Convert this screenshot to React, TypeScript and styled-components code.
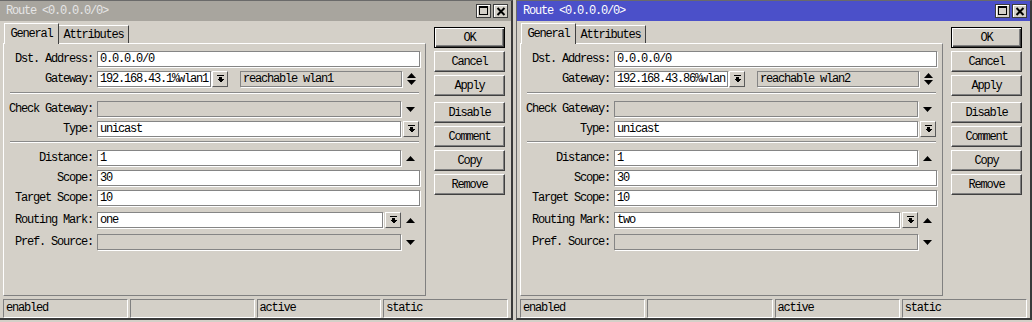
import React from 'react';
import styled, { createGlobalStyle } from 'styled-components';

const GlobalStyle = createGlobalStyle`
  html, body {
    margin: 0;
    padding: 0;
    background: #d4d0c8;
    overflow: hidden;
  }
  body {
    font-family: 'Liberation Mono', 'Courier New', monospace;
    font-size: 12px;
    letter-spacing: -1.2px;
    color: #000;
  }
  button {
    font: inherit;
    letter-spacing: inherit;
    color: inherit;
  }
`;

interface RouteData {
  gateway: string;
  reachable: string;
  mark: string;
  active?: boolean;
  width: number;
}

const routes: RouteData[] = [
  { gateway: '192.168.43.1%wlan1', reachable: 'reachable wlan1', mark: 'one', width: 514 },
  { gateway: '192.168.43.86%wlan', reachable: 'reachable wlan2', mark: 'two', active: true, width: 516 },
];

const Desktop = styled.div`
  display: flex;
  gap: 3px;
  margin-left: -1px;
  width: 1040px;
  height: 322px;
`;

const Window = styled.div<{ $w: number }>`
  width: ${(p) => p.$w}px;
  height: 320px;
  flex: none;
  box-sizing: border-box;
  display: flex;
  flex-direction: column;
  background: #d4d0c8;
  border-top: 1px solid #6a6a6a;
  border-left: 1px solid #6a6a6a;
  border-right: 2px solid #3a3a3a;
  border-bottom: 2px solid #3a3a3a;
`;

const TitleBar = styled.div<{ $active?: boolean }>`
  height: 20px;
  flex: none;
  display: flex;
  align-items: center;
  padding: 0 3px 0 6px;
  background: ${(p) => (p.$active ? '#4b50c9' : '#a8a59e')};
  color: ${(p) => (p.$active ? '#ffffff' : '#e6e6e6')};
`;

const Title = styled.span`
  flex: 1;
  white-space: nowrap;
`;

const TitleButtons = styled.div`
  display: flex;
  gap: 2px;
`;

const TitleButton = styled.div`
  width: 15px;
  height: 14px;
  box-sizing: border-box;
  border: 1px solid #3c3c3c;
  background: #d4d0c8;
  box-shadow: inset 1px 1px 0 #ffffff;
  display: flex;
  align-items: center;
  justify-content: center;
`;

const Body = styled.div`
  height: 275px;
  flex: none;
  box-sizing: border-box;
  display: flex;
  padding: 2px 0 0 3px;
`;

const TabArea = styled.div`
  width: 423px;
  display: flex;
  flex-direction: column;
`;

const TabStrip = styled.div`
  height: 20px;
  display: flex;
  align-items: flex-end;
  padding-left: 1px;
`;

const Tab = styled.div<{ $selected?: boolean; $w: number }>`
  width: ${(p) => p.$w}px;
  height: ${(p) => (p.$selected ? 21 : 18)}px;
  margin-bottom: ${(p) => (p.$selected ? -1 : 0)}px;
  position: relative;
  z-index: ${(p) => (p.$selected ? 1 : 0)};
  box-sizing: border-box;
  display: flex;
  align-items: center;
  justify-content: center;
  padding-bottom: ${(p) => (p.$selected ? 1 : 0)}px;
  background: ${(p) => (p.$selected ? '#d4d0c8' : '#cbc7bf')};
  border-top: 1px solid #ffffff;
  border-left: ${(p) => (p.$selected ? '1px solid #ffffff' : 'none')};
  border-right: 1px solid #404040;
`;

const Panel = styled.div`
  flex: 1;
  box-sizing: border-box;
  padding-top: 7px;
  border-top: 1px solid #ffffff;
  border-left: 1px solid #ffffff;
  border-right: 1px solid #808080;
  border-bottom: 1px solid #808080;
`;

const Row = styled.div<{ $mt?: number }>`
  display: flex;
  align-items: center;
  height: 16px;
  margin-top: ${(p) => p.$mt ?? 4}px;

  &:first-child {
    margin-top: 0;
  }
`;

const Label = styled.div`
  width: 93px;
  box-sizing: border-box;
  padding-right: 4px;
  text-align: right;
  white-space: nowrap;
`;

const FieldArea = styled.div`
  width: 323px;
  height: 16px;
  display: flex;
  align-items: center;
`;

const Field = styled.div<{ $w?: number; $off?: boolean; $ml?: number }>`
  ${(p) => (p.$w ? `width: ${p.$w}px; flex: none;` : 'flex: 1;')}
  height: 16px;
  margin-left: ${(p) => p.$ml ?? 0}px;
  box-sizing: border-box;
  border: 1px solid #858585;
  box-shadow: 1px 1px 0 #ffffff;
  background: ${(p) => (p.$off ? '#d4d0c8' : '#ffffff')};
  padding-left: 2px;
  line-height: 14px;
  white-space: nowrap;
  overflow: hidden;
`;

const DropButton = styled.div<{ $ml?: number }>`
  width: 16px;
  height: 16px;
  flex: none;
  margin-left: ${(p) => p.$ml ?? 2}px;
  box-sizing: border-box;
  border: 1px solid;
  border-color: #ffffff #5a5a5a #5a5a5a #ffffff;
  background: #d4d0c8;
  display: flex;
  align-items: center;
  justify-content: center;
`;

const SideIcon = styled.div`
  width: 19px;
  height: 16px;
  flex: none;
  display: flex;
  align-items: center;
  justify-content: center;
`;

const Separator = styled.div<{ $mt: number }>`
  margin: ${(p) => p.$mt}px 6px 7px 6px;
  border-top: 1px solid #8a8a8a;
  border-bottom: 1px solid #ffffff;
`;

const ButtonColumn = styled.div`
  width: 71px;
  margin-left: 8px;
  padding-top: 4px;
  display: flex;
  flex-direction: column;
`;

const Button = styled.button<{ $default?: boolean; $mt?: number }>`
  width: 71px;
  height: 21px;
  margin-top: ${(p) => p.$mt ?? 3}px;
  padding: 0;
  background: #d4d0c8;
  box-sizing: border-box;
  cursor: default;
  border: 1px solid;
  border-color: ${(p) => (p.$default ? '#000000' : '#ffffff #404040 #404040 #ffffff')};
  box-shadow: ${(p) =>
    p.$default
      ? 'inset 1px 1px 0 #ffffff, inset -1px -1px 0 #404040, inset -2px -2px 0 #808080'
      : 'inset -1px -1px 0 #808080'};

  &:first-child {
    margin-top: 0;
  }
`;

const StatusBar = styled.div`
  height: 19px;
  margin: 3px 3px 0 3px;
  display: grid;
  grid-template-columns: repeat(4, 1fr);
  gap: 2px;
`;

const StatusCell = styled.div`
  box-sizing: border-box;
  border: 1px solid;
  border-color: #808080 #ffffff #ffffff #808080;
  padding-left: 2px;
  line-height: 17px;
  white-space: nowrap;
  overflow: hidden;
`;

const TriUp = () => (
  <svg width="9" height="5" viewBox="0 0 9 5">
    <path d="M4.5 0L9 5H0z" fill="#000" />
  </svg>
);

const TriDown = () => (
  <svg width="9" height="5" viewBox="0 0 9 5">
    <path d="M0 0H9L4.5 5z" fill="#000" />
  </svg>
);

const UpDown = () => (
  <svg width="9" height="12" viewBox="0 0 9 12">
    <path d="M4.5 0L9 5H0z" fill="#000" />
    <path d="M0 7H9L4.5 12z" fill="#000" />
  </svg>
);

const DropIcon = () => (
  <svg width="7" height="8" viewBox="0 0 7 8" shapeRendering="crispEdges">
    <rect x="0" y="0" width="7" height="1" fill="#000" />
    <rect x="2" y="2" width="3" height="2" fill="#000" />
    <path d="M0 4H7L3.5 7.5z" fill="#000" />
  </svg>
);

const MaxIcon = () => (
  <svg width="11" height="10" viewBox="0 0 11 10" shapeRendering="crispEdges">
    <rect x="1" y="0" width="9" height="9" fill="#000" />
    <rect x="2" y="2" width="7" height="6" fill="#d4d0c8" />
  </svg>
);

const CloseIcon = () => (
  <svg width="10" height="9" viewBox="0 0 10 9">
    <path d="M1.5 1L8.5 8M8.5 1L1.5 8" stroke="#000" strokeWidth="2" />
  </svg>
);

function RouteWindow({ data }: { data: RouteData }) {
  return (
    <Window $w={data.width}>
      <TitleBar $active={data.active}>
        <Title>Route &lt;0.0.0.0/0&gt;</Title>
        <TitleButtons>
          <TitleButton>
            <MaxIcon />
          </TitleButton>
          <TitleButton>
            <CloseIcon />
          </TitleButton>
        </TitleButtons>
      </TitleBar>
      <Body>
        <TabArea>
          <TabStrip>
            <Tab $selected $w={55}>General</Tab>
            <Tab $w={70}>Attributes</Tab>
          </TabStrip>
          <Panel>
            <Row>
              <Label>Dst. Address:</Label>
              <FieldArea>
                <Field>0.0.0.0/0</Field>
              </FieldArea>
            </Row>
            <Row>
              <Label>Gateway:</Label>
              <FieldArea>
                <Field $w={114}>{data.gateway}</Field>
                <DropButton $ml={1}>
                  <DropIcon />
                </DropButton>
                <Field $w={162} $off $ml={12}>
                  {data.reachable}
                </Field>
                <SideIcon>
                  <UpDown />
                </SideIcon>
              </FieldArea>
            </Row>
            <Separator $mt={5} />
            <Row $mt={0}>
              <Label>Check Gateway:</Label>
              <FieldArea>
                <Field $off />
                <SideIcon>
                  <TriDown />
                </SideIcon>
              </FieldArea>
            </Row>
            <Row>
              <Label>Type:</Label>
              <FieldArea>
                <Field $w={304}>unicast</Field>
                <DropButton>
                  <DropIcon />
                </DropButton>
              </FieldArea>
            </Row>
            <Separator $mt={4} />
            <Row $mt={1}>
              <Label>Distance:</Label>
              <FieldArea>
                <Field>1</Field>
                <SideIcon>
                  <TriUp />
                </SideIcon>
              </FieldArea>
            </Row>
            <Row>
              <Label>Scope:</Label>
              <FieldArea>
                <Field>30</Field>
              </FieldArea>
            </Row>
            <Row>
              <Label>Target Scope:</Label>
              <FieldArea>
                <Field>10</Field>
              </FieldArea>
            </Row>
            <Row $mt={6}>
              <Label>Routing Mark:</Label>
              <FieldArea>
                <Field>{data.mark}</Field>
                <DropButton>
                  <DropIcon />
                </DropButton>
                <SideIcon>
                  <TriUp />
                </SideIcon>
              </FieldArea>
            </Row>
            <Row $mt={6}>
              <Label>Pref. Source:</Label>
              <FieldArea>
                <Field $off />
                <SideIcon>
                  <TriDown />
                </SideIcon>
              </FieldArea>
            </Row>
          </Panel>
        </TabArea>
        <ButtonColumn>
          <Button $default>OK</Button>
          <Button>Cancel</Button>
          <Button>Apply</Button>
          <Button $mt={6}>Disable</Button>
          <Button>Comment</Button>
          <Button>Copy</Button>
          <Button>Remove</Button>
        </ButtonColumn>
      </Body>
      <StatusBar>
        <StatusCell>enabled</StatusCell>
        <StatusCell />
        <StatusCell>active</StatusCell>
        <StatusCell>static</StatusCell>
      </StatusBar>
    </Window>
  );
}

export default function App() {
  return (
    <>
      <GlobalStyle />
      <Desktop>
        {routes.map((r) => (
          <RouteWindow key={r.gateway} data={r} />
        ))}
      </Desktop>
    </>
  );
}
